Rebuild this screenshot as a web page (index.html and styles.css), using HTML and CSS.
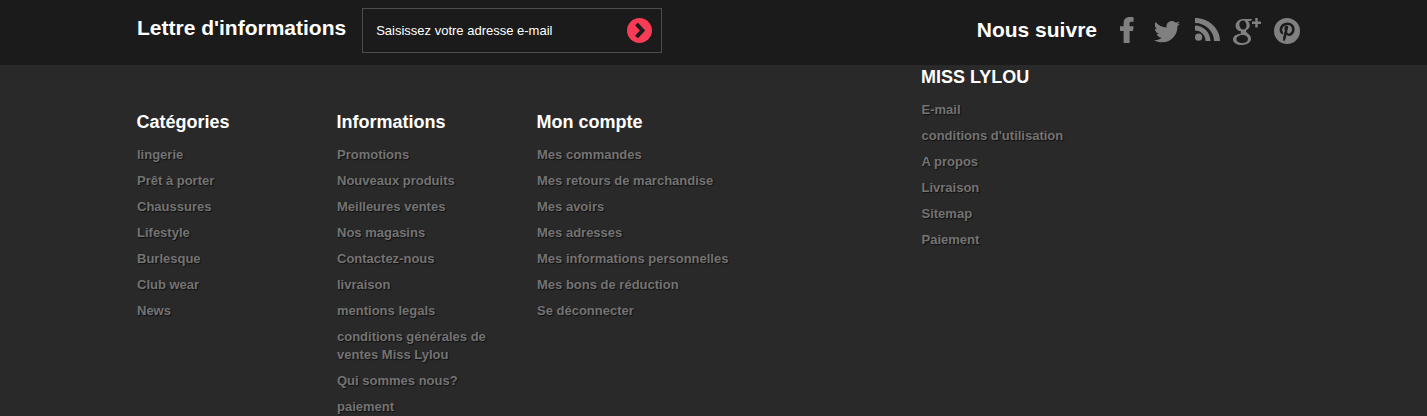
FILE: index.html
```html
<!DOCTYPE html>
<html lang="fr">
<head>
<meta charset="utf-8">
<title>Miss Lylou</title>
<link rel="stylesheet" href="styles.css">
</head>
<body>
<div class="topbar">
  <div class="news">
    <h4 class="news-title">Lettre d'informations</h4>
    <div class="news-box">
      <span class="news-ph">Saisissez votre adresse e-mail</span>
      <svg class="news-go" width="25" height="25" viewBox="0 0 25 25"><circle cx="12.5" cy="12.5" r="12.5" fill="#f93c55"/><path d="M9.5 6 L15.5 12.5 L9.5 19" fill="none" stroke="#1b1b1b" stroke-width="4"/></svg>
    </div>
  </div>
  <div class="follow">
    <span class="follow-title">Nous suivre</span>
    <div class="icons">
      <svg class="ic-f" width="14" height="26" viewBox="0 0 14 26"><path d="M3.6 26V14H0V9.2H3.6V6.2C3.6 2.2 6 0 9.8 0C11.4 0 12.8 0.1 13.6 0.3V4.7H11.2C9.6 4.7 9.6 5.5 9.6 6.8V9.2H13.6L13 14H9.6V26Z" fill="#808080"/></svg>
      <svg class="ic-t" width="26" height="22" viewBox="0 0 26 22"><path d="M26 2.6C25 3 24 3.3 22.9 3.4C24 2.8 24.8 1.7 25.2 0.5C24.2 1.1 23 1.5 21.8 1.8C20.8 0.7 19.4 0 17.9 0C14.9 0 12.5 2.4 12.5 5.4C12.5 5.8 12.6 6.2 12.6 6.6C8.2 6.4 4.2 4.2 1.6 1C1.1 1.8 0.9 2.7 0.9 3.7C0.9 5.6 1.8 7.2 3.3 8.2C2.4 8.2 1.6 7.9 0.9 7.5V7.6C0.9 10.2 2.7 12.4 5.2 12.9C4.4 13.1 3.5 13.2 2.7 13C3.4 15.1 5.4 16.7 7.7 16.7C5.9 18.2 3.5 19 1.3 19C0.9 19 0.4 19 0 18.9C2.4 20.4 5.2 21.3 8.2 21.3C18 21.3 23.4 13.1 23.4 6C23.4 5.8 23.4 5.6 23.4 5.3C24.4 4.6 25.3 3.7 26 2.6Z" fill="#808080"/></svg>
      <svg class="ic-r" width="25" height="23" viewBox="0 0 25 23"><circle cx="3.6" cy="19.2" r="3.6" fill="#808080"/><path d="M0 7.5V12.5C5.8 12.5 10.5 17 10.5 23H15.5C15.5 14.5 8.5 7.5 0 7.5Z" fill="#808080"/><path d="M0 0V5C10 5 19 13 19 23H25C25 10 13.5 0 0 0Z" fill="#808080"/></svg>
      <svg class="ic-g" width="28" height="27" viewBox="0 0 28 27"><path fill-rule="evenodd" d="M10.5 1C6.5 1 2.6 3.6 2.6 7.8C2.6 10.8 4.8 13 8 13.2C7.5 14 7.7 15 8.4 15.7C3.8 15.7 0 17.9 0 21.4C0 24.9 4 27 8.8 27C14.8 27 18 23.9 18 20.8C18 18.3 16.6 17 15.2 15.8C14.2 14.9 13 14.1 13 13.1C13 12 15.4 11.3 16.4 9.2C17.2 7.2 16.5 4.4 15 2.9H17.4L19.4 1ZM9.6 2.6C11.7 2.3 13.2 4.6 13.5 6.8C13.8 9.2 12.8 11.4 10.7 11.6C8.5 11.8 6.8 9.6 6.4 7.4C6 5 7.4 2.9 9.6 2.6ZM9.6 16.9C12.8 16.9 15 18.6 15 21C15 23.6 12.8 25 9.4 25C6 25 3.4 23.4 3.4 21C3.4 18.6 6.4 16.9 9.6 16.9Z" fill="#808080"/><path d="M22.3 0H24.7V3.6H28V6H24.7V9.6H22.3V6H19V3.6H22.3Z" fill="#808080"/></svg>
      <svg class="ic-p" width="26" height="26" viewBox="0 0 26 26"><path fill-rule="evenodd" d="M13 0A13 13 0 1 0 13 26A13 13 0 1 0 13 0ZM13.5 4.6C17.8 4.6 20.6 7.6 20.6 11C20.6 15 18.2 17.9 15 17.9C13.9 17.9 13 17.3 12.6 16.6L11.9 19.5C11.6 20.7 10.9 22.1 10.2 23.2L9.2 22.8C9 21.6 9 20.2 9.2 19.2L10.8 12.4C10.8 12.4 10.4 11.6 10.4 10.5C10.4 8.8 11.4 7.6 12.6 7.6C13.7 7.6 14.2 8.4 14.2 9.3C14.2 10.4 13.5 12 13.2 13.4C12.9 14.6 13.8 15.5 14.9 15.5C16.9 15.5 18 13.4 18 11.1C18 8.8 16.5 7 13.6 7C10.4 7 8.2 9.4 8.2 12.1C8.2 13.1 8.5 13.8 9 14.4C9.2 14.6 9.2 14.8 9.2 15L8.9 16C8.8 16.4 8.5 16.5 8.2 16.3C6.4 15.6 5.6 13.7 5.6 11.8C5.6 8.3 8.5 4.6 13.5 4.6Z" fill="#808080"/></svg>
    </div>
  </div>
</div>
<div class="links">
  <section class="col">
    <h4 class="col-title">Catégories</h4>
    <ul class="list">
      <li>lingerie</li><li>Prêt à porter</li><li>Chaussures</li><li>Lifestyle</li><li>Burlesque</li><li>Club wear</li><li>News</li>
    </ul>
  </section>
  <section class="col">
    <h4 class="col-title">Informations</h4>
    <ul class="list">
      <li>Promotions</li><li>Nouveaux produits</li><li>Meilleures ventes</li><li>Nos magasins</li><li>Contactez-nous</li><li>livraison</li><li>mentions legals</li><li>conditions générales de ventes Miss Lylou</li><li>Qui sommes nous?</li><li>paiement</li>
    </ul>
  </section>
  <section class="col col-account">
    <h4 class="col-title">Mon compte</h4>
    <ul class="list">
      <li>Mes commandes</li><li>Mes retours de marchandise</li><li>Mes avoirs</li><li>Mes adresses</li><li>Mes informations personnelles</li><li>Mes bons de réduction</li><li>Se déconnecter</li>
    </ul>
  </section>
  <section class="col col-brand">
    <h4 class="col-title">MISS LYLOU</h4>
    <ul class="list">
      <li>E-mail</li><li>conditions d'utilisation</li><li>A propos</li><li>Livraison</li><li>Sitemap</li><li>Paiement</li>
    </ul>
  </section>
</div>
</body>
</html>
```
FILE: styles.css
```css
html, body {
  margin: 0;
  padding: 0;
  height: 416px;
  overflow: hidden;
  background: #292929;
  font-family: "Liberation Sans", Arial, sans-serif;
}
.topbar {
  height: 65px;
  background: #1b1b1b;
  display: flex;
  justify-content: space-between;
  padding: 0 127px 0 137px;
}
.news {
  display: flex;
  align-items: flex-start;
}
.news-title {
  margin: 16px 16px 0 0;
  font-size: 21px;
  line-height: 24px;
  font-weight: bold;
  color: #fff;
}
.news-box {
  margin-top: 8px;
  width: 300px;
  height: 45px;
  border: 1px solid #4d4d4d;
  display: flex;
  align-items: center;
  justify-content: space-between;
  padding-left: 13px;
  padding-right: 9px;
  box-sizing: border-box;
}
.news-ph {
  font-size: 13px;
  color: #fff;
}
.news-go { display: block; }
.follow {
  display: flex;
  align-items: flex-start;
}
.follow-title {
  margin: 18px 23px 0 0;
  font-size: 21px;
  line-height: 24px;
  font-weight: bold;
  color: #fff;
}
.icons {
  display: flex;
  align-items: flex-start;
  padding-top: 17px;
}
.ic-f { margin-right: 20px; }
.ic-t { margin: 4px 15px 0 0; }
.ic-r { margin: 1px 13px 0 0; }
.ic-g { margin: 1px 13px 0 0; }
.ic-p { margin-top: 1px; }
.links {
  display: flex;
  align-items: flex-start;
  padding-left: 137px;
}
.col {
  width: 200px;
  padding-top: 46px;
}
.col-account { width: 384.5px; }
.col-brand { width: 220px; padding-top: 1px; }
.col-title {
  margin: 0 0 0 -0.5px;
  font-size: 18px;
  line-height: 22px;
  font-weight: bold;
  color: #fff;
}
.list {
  list-style: none;
  margin: 13px 0 0;
  padding: 0;
  width: 165px;
}
.col-account .list, .col-brand .list { width: 220px; }
.list li {
  font-size: 13px;
  line-height: 18px;
  margin-bottom: 8px;
  font-weight: bold;
  color: #737373;
  text-shadow: 1px 1px 1px #111;
}
```
